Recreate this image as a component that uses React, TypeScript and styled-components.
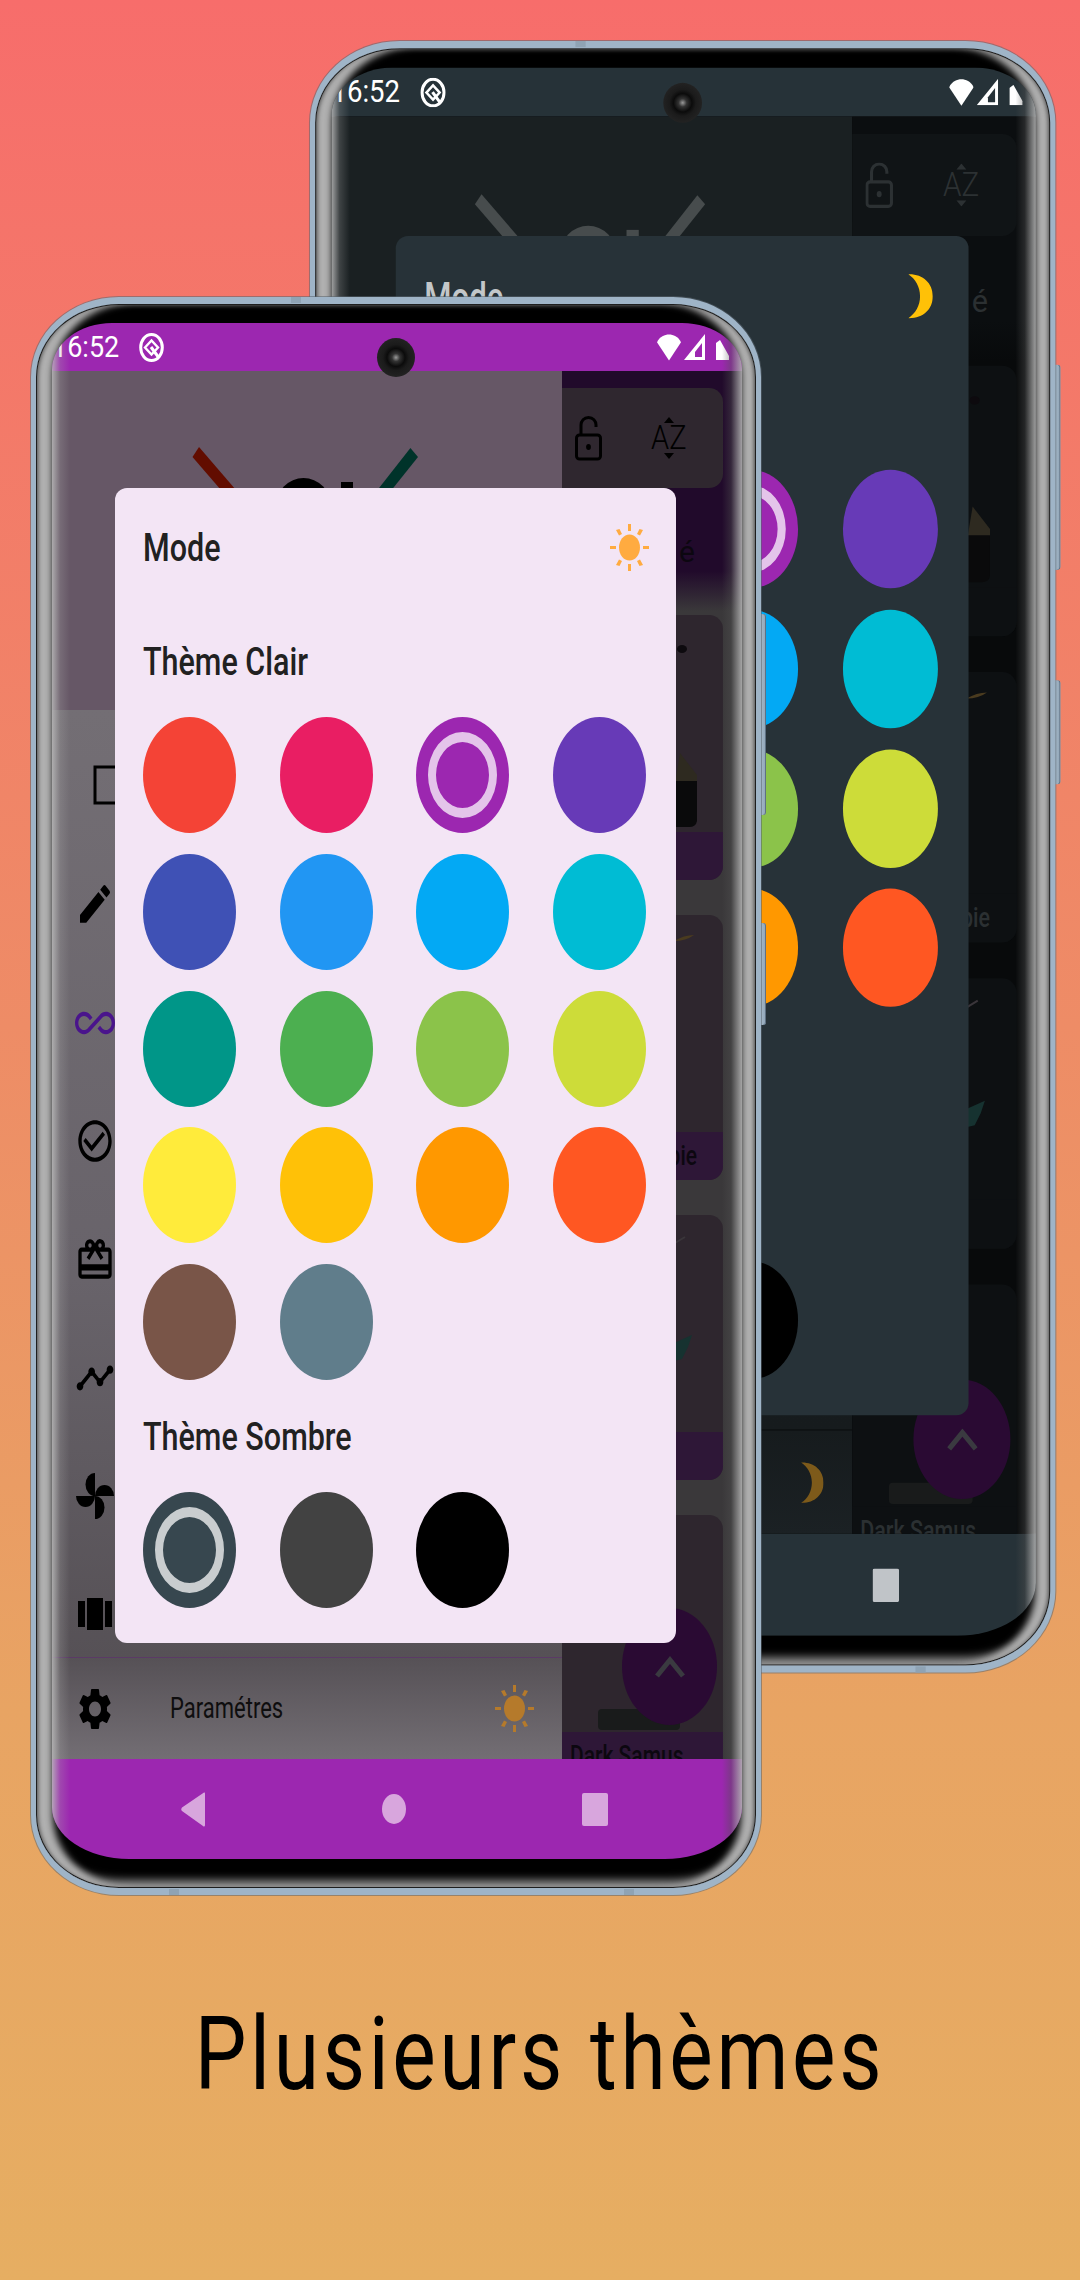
import React from "react";
import styled, { createGlobalStyle, ThemeProvider } from "styled-components";
import {
  MdEdit,
  MdAllInclusive,
  MdCheckCircleOutline,
  MdCardGiftcard,
  MdTimeline,
  MdSettings,
} from "react-icons/md";

type Palette = {
  bar: string; barIcon: string; header: string; listTop: string; listMid: string; listLow: string;
  rule: string; ink: string; accent: string; side: string; sideTop: string; panel: string; foot: string;
  panelSoft: string; dimText: string; modal: string; modalText: string; logo1: string; logo2: string; logo3: string;
  dimSun: string; glyph: string;
};

const light: Palette = {
  bar: "#9c27b0", barIcon: "#d8a6dd", header: "#665766", listTop: "#736e74", listMid: "#68636a", listLow: "#565156",
  rule: "#5b3a66", ink: "#000000", accent: "#4a148c", side: "#3a383a", sideTop: "#210a2b", panel: "#2e262e",
  foot: "#2e1737", panelSoft: "#2f272f", dimText: "#0c0710", modal: "#f3e5f5", modalText: "#212121",
  logo1: "#620d00", logo2: "#00332a", logo3: "#000000", dimSun: "#b57a2b", glyph: "#ffab40",
};

const dark: Palette = {
  bar: "#263238", barIcon: "#c0c4c8", header: "#1a2022", listTop: "#1b2124", listMid: "#191f22", listLow: "#161b1d",
  rule: "#12171a", ink: "#2c3133", accent: "#2c3133", side: "#080a0b", sideTop: "#0b0e10", panel: "#0d1012",
  foot: "#0d1012", panelSoft: "#101416", dimText: "#2b3032", modal: "#273238", modalText: "#c3c7c9",
  logo1: "#474c4d", logo2: "#474c4d", logo3: "#474c4d", dimSun: "#7d5a1a", glyph: "#ffc107",
};

const t = (k: keyof Palette) => ({ theme }: { theme: any }) => theme[k];

const Global = createGlobalStyle`
  html, body { margin: 0; padding: 0; }
  body { font-family: Roboto, "Liberation Sans", sans-serif; }
`;

const Page = styled.div`
  position: relative;
  width: 1080px;
  height: 2280px;
  overflow: hidden;
  background: linear-gradient(180deg, #f76d6b 0%, #ee8c66 45%, #e8a463 75%, #e6ae62 100%);
  display: flex;
  flex-direction: column;
  align-items: center;
  padding-top: 1994px;
  box-sizing: border-box;
`;

const Headline = styled.h1`
  margin: 0;
  font-family: Roboto, sans-serif;
  font-weight: 400;
  font-size: 82px;
  line-height: 120px;
  letter-spacing: 3.7px;
  color: #000;
  white-space: nowrap;
  transform: scaleY(1.235);
`;

const PhoneWrap = styled.div<{ $x: number; $y: number; $scale: number }>`
  position: absolute;
  left: ${(p) => p.$x}px;
  top: ${(p) => p.$y}px;
  width: 730px;
  height: 1598px;
  transform: scale(${(p) => p.$scale});
  transform-origin: 0 0;
`;

const SideKey = styled.div<{ $top: number; $h: number }>`
  position: absolute;
  right: -5px;
  top: ${(p) => p.$top}px;
  width: 6px;
  height: ${(p) => p.$h}px;
  background: linear-gradient(90deg, #a9bccb, #8ea3b6);
  border-radius: 0 3px 3px 0;
  box-shadow: inset -1px 0 0 #5f7183;
`;

const Frame = styled.div`
  position: relative;
  width: 100%;
  height: 100%;
  box-sizing: border-box;
  border-style: solid;
  border-color: #9fb4c7;
  border-width: 7px 5px;
  border-radius: 88px / 80px;
  padding: 19px 14px 29px 16px;
  background: #000;
  box-shadow:
    0 0 0 1px rgba(90, 100, 110, 0.55),
    inset 0 0 0 1px #1e1e1e,
    inset 4px 0 4px -2px #4b4b4b,
    inset -4px 0 4px -2px #4b4b4b,
    inset 19px 0 7px -2px #b0b0b0,
    inset -17px 0 7px -2px #b0b0b0,
    inset 0 -11px 8px -3px #8c8c8c;
`;

const Notch = styled.span<{ $x: number; $bottom?: boolean }>`
  position: absolute;
  left: ${(p) => p.$x}px;
  ${(p) => (p.$bottom ? "bottom: -7px;" : "top: -7px;")}
  width: 10px;
  height: 6px;
  background: #8fa3b4;
`;

const Screen = styled.div`
  position: relative;
  width: 100%;
  height: 100%;
  display: flex;
  flex-direction: column;
  overflow: hidden;
  border-radius: 60px 60px 77px 77px / 47px 47px 52px 52px;
  &::after {
    content: "";
    position: absolute;
    inset: 0;
    pointer-events: none;
    background:
      linear-gradient(90deg, rgba(185, 185, 185, 0.85), rgba(172, 172, 172, 0.25) 8px, rgba(172, 172, 172, 0) 18px) left / 20px 100% no-repeat,
      linear-gradient(270deg, rgba(176, 176, 176, 0.9), rgba(80, 80, 80, 0.4) 11px, rgba(60, 60, 60, 0) 20px) right / 24px 100% no-repeat;
  }
`;

const Camera = styled.div`
  position: absolute;
  left: 50%;
  top: 34px;
  width: 38px;
  height: 39px;
  margin-left: -19px;
  border-radius: 50%;
  background: radial-gradient(circle at 50% 50%, #9a9a9a 0, #333 4px, #0b0b0b 9px, #1b1b1b 13px, #2b2b2b 100%);
  z-index: 2;
`;

const StatusBar = styled.div`
  flex: none;
  height: 48px;
  background: ${t("bar")};
  display: flex;
  align-items: center;
  color: #fff;
  padding: 0 13px 0 0;
`;

const Clock = styled.span`
  font-size: 27px;
  font-weight: 400;
  transform: scaleY(1.12);
  display: inline-block;
  margin-right: 20px;
`;

const StatusRight = styled.div`
  margin-left: auto;
  display: flex;
  align-items: center;
  gap: 3px;
`;

const BatteryGlyph = styled.svg`
  margin-left: 8px;
  margin-top: 6px;
`;

const Body = styled.div`
  position: relative;
  flex: 1;
  min-height: 0;
  display: grid;
  grid-template-columns: 510px 1fr;
`;

const Drawer = styled.aside`
  display: flex;
  flex-direction: column;
  min-height: 0;
`;

const DrawerHead = styled.div`
  flex: none;
  height: 339px;
  background: ${t("header")};
  svg { display: block; width: 100%; height: 100%; }
`;

const NavList = styled.nav`
  flex: 1;
  padding: 51px 0 15px 23px;
  display: flex;
  flex-direction: column;
  gap: 68.4px;
  background: linear-gradient(180deg, ${t("listTop")}, ${t("listMid")} 60%, ${t("listLow")});
`;

const NavIcon = styled.div<{ $active?: boolean }>`
  width: 40px;
  height: 50px;
  color: ${(p) => (p.$active ? p.theme.accent : p.theme.ink)};
  svg { display: block; width: 40px; height: 50px; overflow: visible; }
`;

const Rule = styled.div`
  flex: none;
  height: 1px;
  background: ${t("rule")};
`;

const SettingsRow = styled.div`
  flex: none;
  height: 101px;
  display: flex;
  align-items: center;
  padding: 0 28px 0 23px;
  background: linear-gradient(180deg, ${t("listLow")}, ${t("listTop")});
  color: ${t("ink")};
`;

const SettingsLabel = styled.span`
  margin-left: 55px;
  font-size: 22px;
  color: ${t("ink")};
  opacity: 0.85;
  transform: scaleY(1.3);
`;

const SunSlot = styled.div`
  margin-left: auto;
  display: flex;
  color: ${t("dimSun")};
`;

const Side = styled.section`
  position: relative;
  background: linear-gradient(180deg, ${t("sideTop")} 0, ${t("sideTop")} 200px, ${t("side")} 240px);
  padding: 17px 19px 0 0;
  display: flex;
  flex-direction: column;
  overflow: hidden;
  min-height: 0;
`;

const Tools = styled.div`
  flex: none;
  height: 100px;
  background: ${t("panelSoft")};
  border-radius: 0 14px 14px 0;
  display: flex;
  align-items: center;
  padding-left: 13px;
  gap: 49px;
  color: ${t("ink")};
`;

const SortIcon = styled.div`
  display: flex;
  flex-direction: column;
  align-items: center;
  gap: 0;
  svg { display: block; }
`;

const SortText = styled.span`
  font-size: 29px;
  line-height: 30px;
  font-weight: 300;
  transform: scaleY(1.12);
`;

const SoloLabel = styled.div`
  flex: none;
  height: 92px;
  box-sizing: border-box;
  display: flex;
  align-items: center;
  justify-content: flex-end;
  padding: 34px 28px 0 0;
  font-size: 30px;
  color: ${t("dimText")};
`;

const CardItem = styled.article`
  flex: none;
  height: 265px;
  margin-top: 35px;
  border-radius: 0 14px 14px 0;
  overflow: hidden;
  background: ${t("panel")};
  display: flex;
  flex-direction: column;
`;

const CardArt = styled.svg`
  flex: none;
  display: block;
  width: 161px;
  height: 217px;
`;

const CardFoot = styled.div<{ $left?: boolean }>`
  flex: none;
  height: 48px;
  background: ${t("foot")};
  display: flex;
  align-items: center;
  justify-content: ${(p) => (p.$left ? "flex-start" : "flex-end")};
  padding: 0 26px 0 8px;
  font-size: 21px;
  font-weight: 500;
  white-space: nowrap;
  color: ${t("dimText")};
`;

const CardWord = styled.span`
  display: inline-block;
  transform: scaleY(1.3);
`;

const Fab = styled.div`
  position: absolute;
  right: 25px;
  top: 1237px;
  width: 95px;
  height: 117px;
  border-radius: 50%;
  background: #2a0a33;
  display: flex;
  align-items: center;
  justify-content: center;
`;

const NavBar = styled.div`
  flex: none;
  height: 100px;
  background: ${t("bar")};
  display: grid;
  grid-template-columns: repeat(3, 201px);
  justify-content: center;
  justify-items: center;
  align-items: center;
  padding-right: 6px;
  color: ${t("barIcon")};
`;

const Dialog = styled.div`
  position: absolute;
  left: 63px;
  top: 165px;
  width: 561px;
  box-sizing: border-box;
  padding: 0 27px 35px 28px;
  background: ${t("modal")};
  color: ${t("modalText")};
  border-radius: 12px;
  z-index: 1;
`;

const DialogHead = styled.div`
  height: 118px;
  display: flex;
  align-items: center;
  justify-content: space-between;
`;

const DialogTitle = styled.span`
  display: inline-block;
  font-size: 30.5px;
  font-weight: 500;
  transform: scaleY(1.3);
`;

const DialogGlyph = styled.span<{ $inset?: boolean }>`
  display: flex;
  color: ${t("glyph")};
  margin-right: ${(p) => (p.$inset ? 8 : 0)}px;
`;

const Section = styled.div<{ $h: number }>`
  height: ${(p) => p.$h}px;
  display: flex;
  align-items: center;
`;

const Swatches = styled.div`
  display: grid;
  grid-template-columns: repeat(4, 93px);
  grid-auto-rows: 116px;
  column-gap: 43.6px;
  row-gap: 20.8px;
`;

const Swatch = styled.div<{ $c: string; $on?: string }>`
  position: relative;
  border-radius: 50%;
  background: ${(p) => p.$c};
  ${(p) =>
    p.$on
      ? `&::after {
          content: "";
          position: absolute;
          left: 12px; right: 12px; top: 15px; bottom: 15px;
          border-radius: 50%;
          border: solid ${p.$on};
          border-width: 10px 8px;
        }`
      : ""}
`;

const Sun = ({ w = 39, h = 47 }: { w?: number; h?: number }) => (
  <svg width={w} height={h} viewBox="0 0 39 47" fill="currentColor">
    <ellipse cx="19.5" cy="23.5" rx="10.5" ry="13" />
    <rect x="18" y="0" width="3" height="7" />
    <rect x="18" y="40" width="3" height="7" />
    <rect x="0" y="22" width="6" height="3" />
    <rect x="33" y="22" width="6" height="3" />
    <path d="M6 6l3.5-1 2.5 5-3 1.5z M33 6l-3.5-1-2.5 5 3 1.5z M6 41l3.5 1 2.5-5-3-1.5z M33 41l-3.5 1-2.5-5 3-1.5z" />
  </svg>
);

const Moon = ({ w = 24, h = 44 }: { w?: number; h?: number }) => (
  <svg width={w} height={h} viewBox="0 0 24 44" fill="currentColor">
    <path d="M0 0.5C14 0 24 9 24 22S14 44 0 43.5C7 39 11.5 31 11.5 22S7 5 0 0.5z" />
  </svg>
);

const LockOpen = () => (
  <svg width="27" height="45" viewBox="0 0 27 45" fill="none" stroke="currentColor" strokeWidth="3">
    <rect x="1.5" y="19" width="24" height="24" rx="3" />
    <path d="M6 19V9c0-4 3-7.5 7.5-7.5S21 5 21 9v2" />
    <ellipse cx="13.5" cy="31" rx="2.4" ry="3" fill="currentColor" stroke="none" />
  </svg>
);

const RectIcon = () => (
  <svg viewBox="0 0 40 50" fill="none" stroke="currentColor" strokeWidth="3">
    <rect x="20" y="6" width="44" height="36" />
  </svg>
);

const FanIcon = () => (
  <svg viewBox="0 0 40 50" fill="currentColor">
    <path d="M20 25V2A9.5 11.5 0 0 0 20 25z" />
    <path d="M20 25H39A9.5 11 0 0 0 20 25z" />
    <path d="M20 25V48A9.5 11.5 0 0 0 20 25z" />
    <path d="M20 25H1A9.5 11 0 0 0 20 25z" />
  </svg>
);

const BandIcon = () => (
  <svg viewBox="0 0 40 50" fill="currentColor">
    <rect x="3" y="11" width="7" height="26" />
    <rect x="12" y="8" width="16" height="32" />
    <rect x="30" y="11" width="7" height="26" />
  </svg>
);

const RING = "rgba(255,255,255,0.73)";
const lightColours = [
  "#f44336", "#e91e63", "#9c27b0", "#673ab7",
  "#3f51b5", "#2196f3", "#03a9f4", "#00bcd4",
  "#009688", "#4caf50", "#8bc34a", "#cddc39",
  "#ffeb3b", "#ffc107", "#ff9800", "#ff5722",
  "#795548", "#607d8b",
];
const darkColours = ["#37474f", "#424242", "#000000"];

const navIcons: { key: string; node: React.ReactNode; active?: boolean }[] = [
  { key: "rect", node: <RectIcon /> },
  { key: "pen", node: <MdEdit preserveAspectRatio="none" /> },
  { key: "inf", node: <MdAllInclusive preserveAspectRatio="none" />, active: true },
  { key: "check", node: <MdCheckCircleOutline preserveAspectRatio="none" /> },
  { key: "gift", node: <MdCardGiftcard preserveAspectRatio="none" /> },
  { key: "line", node: <MdTimeline preserveAspectRatio="none" /> },
  { key: "fan", node: <FanIcon /> },
  { key: "band", node: <BandIcon /> },
];

const Phone = ({ mode, x, y, scale }: { mode: "light" | "dark"; x: number; y: number; scale: number }) => {
  const isLight = mode === "light";
  const p = isLight ? light : dark;
  return (
    <ThemeProvider theme={p}>
      <PhoneWrap $x={x} $y={y} $scale={scale}>
        <SideKey $top={317} $h={201} />
        <SideKey $top={626} $h={102} />
        <Frame>
          <Notch $x={255} />
          <Notch $x={133} $bottom />
          <Notch $x={588} $bottom />
          <Camera />
          <Screen>
            <StatusBar>
              <Clock>16:52</Clock>
              <svg width="25" height="29" viewBox="0 0 25 29" fill="none" stroke="#fff">
                <ellipse cx="12.5" cy="14.5" rx="10.8" ry="13" strokeWidth="3" />
                <path d="M6 14.5l6.5-7 6.5 7-6.5 7z" strokeWidth="2.4" />
                <path d="M12 14l8 11" strokeWidth="3" />
              </svg>
              <StatusRight>
                <svg width="24" height="27" viewBox="0 0 25 27" fill="#fff">
                  <path d="M0 8C3 2 8 0 12.5 0S22 2 25 8L12.5 27z" />
                </svg>
                <svg width="21" height="26" viewBox="0 0 21 26">
                  <path d="M21 0V26H0z" fill="#fff" />
                  <path d="M18 9V23H11V18z" fill={p.bar} />
                </svg>
                <BatteryGlyph width="13" height="20" viewBox="0 0 13 20">
                  <path d="M0 3L4 0 13 16V20H0z" fill="#fff" />
                </BatteryGlyph>
              </StatusRight>
            </StatusBar>
            <Body>
              <Drawer>
                <DrawerHead>
                  <svg viewBox="0 0 510 339" aria-hidden>
                    <polygon points="147,76 190,126 175,126 140.5,86" fill={p.logo1} />
                    <polygon points="358.4,77 366,86 334,126 320,126" fill={p.logo2} />
                    <ellipse cx="251.5" cy="135" rx="27.5" ry="28" fill={p.logo3} />
                    <rect x="289" y="111" width="12" height="20" fill={p.logo3} />
                  </svg>
                </DrawerHead>
                <NavList>
                  {navIcons.map((n) => (
                    <NavIcon key={n.key} $active={n.active}>
                      {n.node}
                    </NavIcon>
                  ))}
                </NavList>
                <Rule />
                <SettingsRow>
                  <NavIcon>
                    <MdSettings preserveAspectRatio="none" />
                  </NavIcon>
                  <SettingsLabel>Paramétres</SettingsLabel>
                  <SunSlot>{isLight ? <Sun /> : <Moon w={22} h={42} />}</SunSlot>
                </SettingsRow>
              </Drawer>
              <Side>
                <Tools>
                  <LockOpen />
                  <SortIcon>
                    <svg width="10" height="6" viewBox="0 0 10 6" fill="currentColor"><path d="M5 0l5 6H0z" /></svg>
                    <SortText>AZ</SortText>
                    <svg width="10" height="6" viewBox="0 0 10 6" fill="currentColor"><path d="M5 6L0 0h10z" /></svg>
                  </SortIcon>
                </Tools>
                <SoloLabel>é</SoloLabel>
                <CardItem>
                  <CardArt viewBox="0 0 161 217" aria-hidden>
                    <ellipse cx="120" cy="34" rx="5" ry="4" fill="#0d0a0e" />
                    <path d="M113 168l5-30 17 22v8z" fill="#2e2a20" />
                    <path d="M113 166h22v40q-1 6-8 6h-14z" fill="#0a0a0b" />
                  </CardArt>
                  <CardFoot />
                </CardItem>
                <CardItem>
                  <CardArt viewBox="0 0 161 217" aria-hidden>
                    <path d="M112 26q10-6 20-6q-8 6-20 6z" fill="#4a3b1f" />
                  </CardArt>
                  <CardFoot><CardWord>pie</CardWord></CardFoot>
                </CardItem>
                <CardItem>
                  <CardArt viewBox="0 0 161 217" aria-hidden>
                    <path d="M113 28l10-6" stroke="#3a353a" strokeWidth="2" />
                    <path d="M112 128l18-8-4 12-6 12-8 2z" fill="#163230" />
                  </CardArt>
                  <CardFoot />
                </CardItem>
                <CardItem>
                  <CardArt viewBox="0 0 161 217" aria-hidden>
                    <rect x="36" y="194" width="82" height="21" rx="4" fill="#191b1b" />
                  </CardArt>
                  <CardFoot $left><CardWord>Dark Samus</CardWord></CardFoot>
                </CardItem>
              </Side>
              <Fab>
                <svg width="30" height="22" viewBox="0 0 30 22" fill="none" stroke="#3a3a40" strokeWidth="5">
                  <path d="M2 20L15 4l13 16" />
                </svg>
              </Fab>
            </Body>
            <NavBar>
              <svg width="24" height="35" viewBox="0 0 24 35" fill="currentColor">
                <path d="M23 0.5c1-.2 1 .5 1 1.5V33c0 1.5-1 2-2 1L1 19c-1-1-1-2 0-3.5z" />
              </svg>
              <svg width="24" height="30" viewBox="0 0 24 30" fill="currentColor">
                <ellipse cx="12" cy="15" rx="12" ry="15" />
              </svg>
              <svg width="26" height="33" viewBox="0 0 26 33" fill="currentColor">
                <rect width="26" height="33" rx="2" />
              </svg>
            </NavBar>
            <Dialog>
              <DialogHead>
                <DialogTitle>Mode</DialogTitle>
                {isLight ? (
                  <DialogGlyph><Sun /></DialogGlyph>
                ) : (
                  <DialogGlyph $inset><Moon /></DialogGlyph>
                )}
              </DialogHead>
              <Section $h={111}><DialogTitle>Thème Clair</DialogTitle></Section>
              <Swatches>
                {lightColours.map((c) => (
                  <Swatch key={c} $c={c} $on={c === "#9c27b0" ? RING : undefined} />
                ))}
              </Swatches>
              <Section $h={112}><DialogTitle>Thème Sombre</DialogTitle></Section>
              <Swatches>
                {darkColours.map((c) => (
                  <Swatch key={c} $c={c} $on={c === "#37474f" ? RING : undefined} />
                ))}
              </Swatches>
            </Dialog>
          </Screen>
        </Frame>
      </PhoneWrap>
    </ThemeProvider>
  );
};

export default function App() {
  return (
    <Page>
      <Global />
      <Phone mode="dark" x={310} y={41} scale={1.021} />
      <Phone mode="light" x={31} y={297} scale={1} />
      <Headline>Plusieurs thèmes</Headline>
    </Page>
  );
}
